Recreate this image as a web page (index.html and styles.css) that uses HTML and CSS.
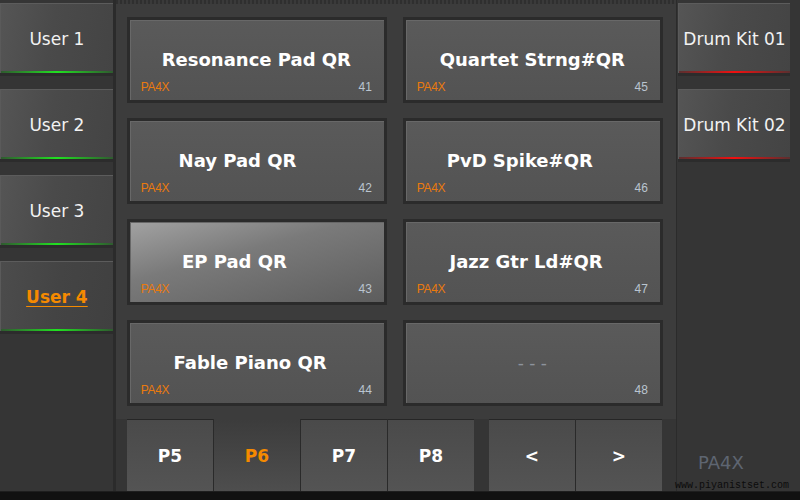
FILE: index.html
```html
<!DOCTYPE html>
<html lang="en">
<head>
  <meta charset="UTF-8" />
  <title>PA4X Sound Select</title>
  <link rel="stylesheet" href="styles.css">
</head>
<body>
  <div class="screen">
    <!-- banchi utente -->
    <div class="side left">
      <div class="side-btn green">User 1</div>
      <div class="side-btn green">User 2</div>
      <div class="side-btn green">User 3</div>
      <div class="side-btn green active"><span>User 4</span></div>
    </div>

    <!-- griglia suoni -->
    <div class="center">
      <div class="panel">
        <div class="tile">
          <div class="name">Resonance Pad QR</div>
          <div class="meta"><span class="brand">PA4X</span><span class="num">41</span></div>
        </div>
        <div class="tile">
          <div class="name">Quartet Strng#QR</div>
          <div class="meta"><span class="brand">PA4X</span><span class="num">45</span></div>
        </div>
        <div class="tile">
          <div class="name">Nay Pad QR      </div>
          <div class="meta"><span class="brand">PA4X</span><span class="num">42</span></div>
        </div>
        <div class="tile">
          <div class="name">PvD Spike#QR    </div>
          <div class="meta"><span class="brand">PA4X</span><span class="num">46</span></div>
        </div>
        <div class="tile selected">
          <div class="name">EP Pad QR       </div>
          <div class="meta"><span class="brand">PA4X</span><span class="num">43</span></div>
        </div>
        <div class="tile">
          <div class="name">Jazz Gtr Ld#QR  </div>
          <div class="meta"><span class="brand">PA4X</span><span class="num">47</span></div>
        </div>
        <div class="tile">
          <div class="name">Fable Piano QR  </div>
          <div class="meta"><span class="brand">PA4X</span><span class="num">44</span></div>
        </div>
        <div class="tile empty">
          <div class="name">- - -</div>
          <div class="meta"><span class="brand"></span><span class="num">48</span></div>
        </div>
      </div>

      <div class="tabs">
        <div class="tab-group">
          <div class="tab">P5</div>
          <div class="tab current">P6</div>
          <div class="tab">P7</div>
          <div class="tab">P8</div>
        </div>
        <div class="tab-group arrows">
          <div class="tab">&lt;</div>
          <div class="tab">&gt;</div>
        </div>
      </div>
    </div>

    <!-- drum kit -->
    <div class="side right">
      <div class="side-btn red">Drum Kit 01</div>
      <div class="side-btn red">Drum Kit 02</div>
      <div class="filler"></div>
      <div class="logo">PA4X</div>
      <div class="site">www.piyanistset.com</div>
    </div>
  </div>
  <div class="bottom-bar"></div>
</body>
</html>
```

FILE: styles.css
```css
body {
  margin: 0;
  width: 800px;
  height: 500px;
  overflow: hidden;
  background: #353535;
  font-family: "DejaVu Sans", Verdana, sans-serif;
  color: #f2f2f2;
}

.screen {
  display: flex;
  height: 491px;
  border-bottom: 1px solid #1e1e1e;
}

.bottom-bar {
  height: 8px;
  background: #111;
}

/* COLONNE LATERALI */
.side {
  display: flex;
  flex-direction: column;
  padding-top: 3px;
}

.side.left {
  width: 113px;
  border-right: 3px solid #2b2b2b;
}

.side.right {
  width: 112px;
  padding-left: 1px;
  padding-right: 10px;
  border-left: 1px solid #2b2b2b;
}

.side-btn {
  position: relative;
  height: 70px;
  margin-bottom: 16px;
  display: flex;
  align-items: center;
  justify-content: center;
  font-size: 17px;
  background: linear-gradient(100deg, #555 0%, #4a4a4a 45%, #444 100%);
  border-top: 1px solid #5c5c5c;
  border-left: 1px solid #5a5a5a;
  box-shadow: 0 3px 0 #2c2c2c;
  box-sizing: border-box;
}

.side-btn::after {
  content: "";
  position: absolute;
  left: 0;
  right: 0;
  bottom: 0;
  height: 2px;
}

.side-btn.green::after {
  background: linear-gradient(90deg, #2f5a2f, #21e021 50%, #2f5a2f);
}

.side-btn.red::after {
  background: linear-gradient(90deg, #5a2f2f, #f01010 50%, #5a2f2f);
}

.side-btn.active {
  background: linear-gradient(100deg, #4c4c4c 0%, #444 50%, #404040 100%);
}

.side-btn.active span {
  color: #f58a00;
  font-weight: bold;
  text-decoration: underline;
  text-underline-offset: 3px;
}

.filler {
  flex: 1;
}

.logo {
  padding-left: 20px;
  font-size: 18px;
  color: #5e6571;
  line-height: 20px;
}

.site {
  margin: 7px -10px -1px -3px;
  font-family: "Liberation Mono", monospace;
  font-size: 10px;
  line-height: 12px;
  color: #0c0c0c;
  text-align: right;
  padding-right: 12px;
}

/* PANNELLO CENTRALE */
.center {
  width: 561px;
  display: flex;
  flex-direction: column;
}

.panel {
  height: 419px;
  box-sizing: border-box;
  padding: 17px 13px 13px 11px;
  background:
    repeating-linear-gradient(90deg, #2f2f2f 0 2px, #3a3a3a 2px 4px) top / 100% 4px no-repeat,
    #3c3c3c;
  display: grid;
  grid-template-columns: 260px 260px;
  grid-template-rows: repeat(4, 86px);
  column-gap: 16px;
  row-gap: 15px;
}

.tile {
  box-sizing: border-box;
  border: 3px solid #2b2b2b;
  background: linear-gradient(180deg, #5a5a5a, #535353);
  box-shadow: inset 1px 1px 0 #686868;
  display: flex;
  flex-direction: column;
  padding: 18px 12px 7px 11px;
}

.tile.selected {
  background: linear-gradient(165deg, #a2a2a2 0%, #7a7a7a 40%, #5d5d5d 100%);
}

.name {
  flex: 1;
  display: flex;
  align-items: center;
  justify-content: center;
  white-space: pre;
  font-weight: bold;
  font-size: 18px;
  color: #fff;
}

.tile.empty .name {
  font-weight: normal;
  font-size: 17px;
  color: #8d939c;
}

.meta {
  display: flex;
  justify-content: space-between;
  font-family: "Liberation Sans", Arial, sans-serif;
  font-size: 12px;
  line-height: 12px;
}

.brand {
  color: #ea7a0e;
  letter-spacing: -0.4px;
}

.num {
  color: #bac5d0;
}

/* PAGINE */
.tabs {
  display: flex;
  padding-left: 11px;
  flex: 1;
}

.tab-group {
  display: flex;
  gap: 1px;
  background: #2a2a2a;
}

.tab-group.arrows {
  margin-left: 15px;
}

.tab {
  width: 86px;
  display: flex;
  align-items: center;
  justify-content: center;
  font-weight: bold;
  font-size: 17px;
  color: #fff;
  border-top: 1px solid #262626;
  background: linear-gradient(180deg, #4a4a4a, #545454);
}

.tab.current {
  color: #f58a00;
  border-top-color: #3c3c3c;
  background: linear-gradient(180deg, #3c3c3c, #4e4e4e);
}
```
